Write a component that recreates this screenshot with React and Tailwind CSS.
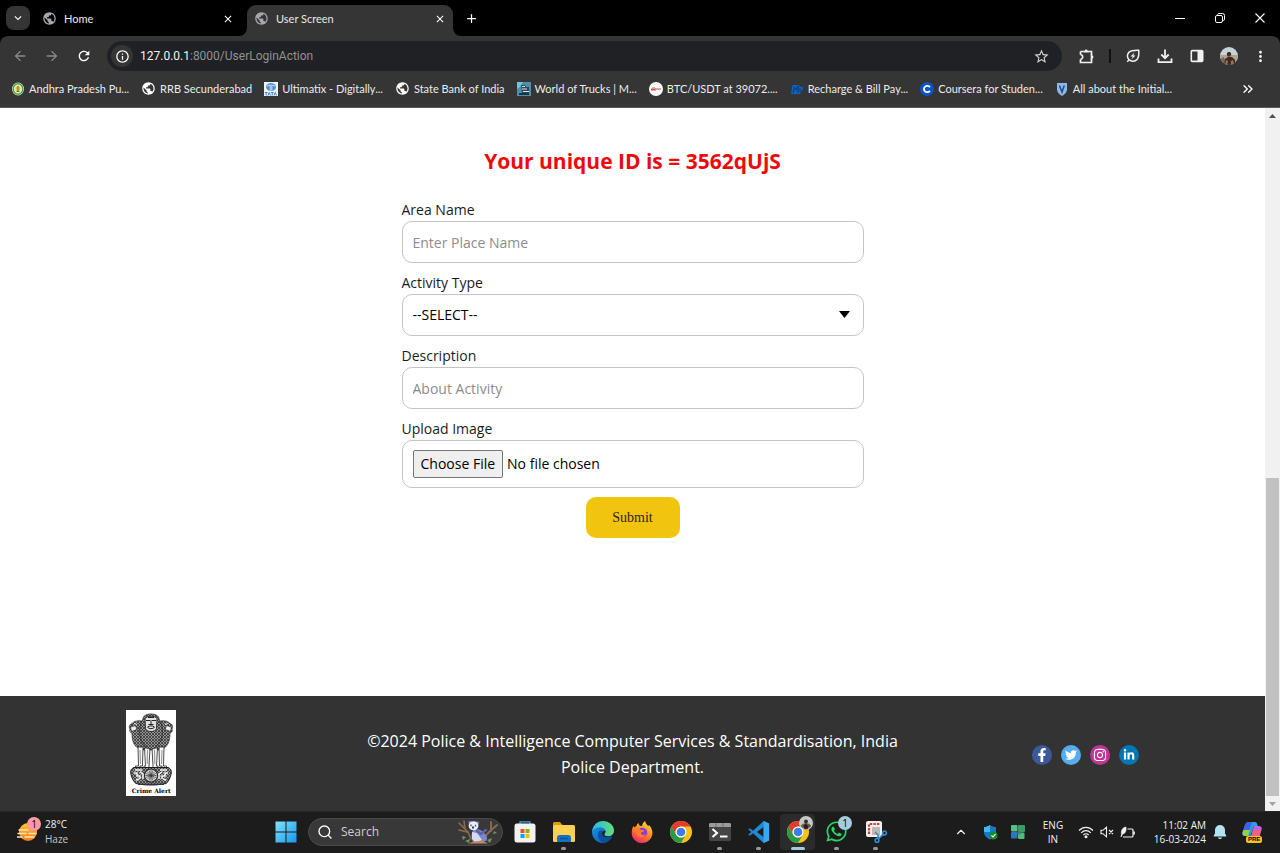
import React from "react";
import {
  MdPublic,
  MdRefresh,
  MdArrowBack,
  MdArrowForward,
  MdInfoOutline,
  MdStarBorder,
  MdMoreVert,
  MdExpandMore,
  MdClose,
  MdAdd,
} from "react-icons/md";
import { FaFacebookF, FaTwitter, FaLinkedinIn, FaInstagram, FaWhatsapp } from "react-icons/fa";
import { ChevronsRight, ChevronUp, Search } from "lucide-react";

/* ---------- Browser chrome ---------- */

function Tab({ title, active }) {
  return (
    <div
      className={
        active
          ? "relative flex h-[31px] w-[206px] items-center gap-[7px] rounded-t-[9px] bg-[#353535] px-[7px] pb-1"
          : "flex h-[31px] w-[206px] items-center gap-[7px] px-[7px] pb-1"
      }
    >
      {active && (
        <>
          <svg className="absolute bottom-0 -left-2 size-2" viewBox="0 0 8 8" aria-hidden="true">
            <path d="M8 0v8H0A8 8 0 0 0 8 0z" fill="#353535" />
          </svg>
          <svg className="absolute -right-2 bottom-0 size-2" viewBox="0 0 8 8" aria-hidden="true">
            <path d="M0 0v8h8A8 8 0 0 1 0 0z" fill="#353535" />
          </svg>
        </>
      )}
      <MdPublic className="size-[15px] shrink-0 text-[#a5a8ad]" />
      <span className="flex-1 text-[11px] leading-4 text-[#e8e8e8]">{title}</span>
      <button type="button" aria-label={`Close ${title}`} className="text-white">
        <MdClose className="size-3" />
      </button>
    </div>
  );
}

function WindowControls() {
  return (
    <div className="ml-auto flex items-center text-white">
      <button type="button" aria-label="Minimize" className="flex h-8 w-10 items-center justify-center">
        <svg className="size-[10px]" viewBox="0 0 10 10">
          <path d="M0 5.5h10" stroke="currentColor" />
        </svg>
      </button>
      <button type="button" aria-label="Restore" className="flex h-8 w-10 items-center justify-center">
        <svg className="size-[10px]" viewBox="0 0 10 10" fill="none" stroke="currentColor">
          <rect x=".5" y="2.5" width="7" height="7" rx="1.500" />
          <path d="M2.500 1.800C2.700 1 3.200.5 4 .5h3.500a2 2 0 0 1 2 2V6c0 .8-.4 1.400-1.200 1.600" />
        </svg>
      </button>
      <button type="button" aria-label="Close window" className="flex h-8 w-10 items-center justify-center">
        <svg className="size-[10px]" viewBox="0 0 10 10">
          <path d="M.5.5l9 9M9.500.5l-9 9" stroke="currentColor" strokeWidth="1.100" />
        </svg>
      </button>
    </div>
  );
}

function TabStrip() {
  return (
    <div className="flex h-9 items-end bg-black font-['Lato',sans-serif]">
      <div className="flex h-9 items-center pl-[6px]">
        <button
          type="button"
          aria-label="Search tabs"
          className="flex size-6 items-center justify-center rounded-lg bg-[#353535] text-white"
        >
          <MdExpandMore className="size-[14px]" />
        </button>
      </div>
      <div className="ml-[5px] flex items-end gap-[6px]">
        <Tab title="Home" />
        <Tab title="User Screen" active />
      </div>
      <button type="button" aria-label="New tab" className="flex h-9 w-9 items-center justify-center text-white">
        <MdAdd className="size-[15px]" />
      </button>
      <div className="ml-auto flex h-9 items-center">
        <WindowControls />
      </div>
    </div>
  );
}

function Avatar() {
  return (
    <svg className="size-[18px]" viewBox="0 0 18 18" aria-hidden="true">
      <defs>
        <clipPath id="avatarClip">
          <circle cx="9" cy="9" r="9" />
        </clipPath>
      </defs>
      <g clipPath="url(#avatarClip)">
        <rect width="18" height="18" fill="#c6d3d8" />
        <rect y="8" width="18" height="10" fill="#b2a58c" />
        <path d="M0 12l4-2 2 8H0z" fill="#6d6e5c" />
        <path d="M4 18l1-6 3-2 4 0 3 3 1 5z" fill="#3d2b26" />
        <circle cx="9" cy="7.500" r="2.200" fill="#4a332a" />
        <path d="M7 6.500a2.200 2.200 0 0 1 4 0z" fill="#17110f" />
        <path d="M6 13l2 1-1 4H5zM11 14l2-1 1 4h-3z" fill="#a0705b" />
      </g>
    </svg>
  );
}

function Toolbar() {
  return (
    <div className="flex items-center bg-black">
      <div className="flex h-[38px] flex-1 items-center rounded-t-lg bg-[#353535] pt-[2px] pr-[11px] pl-3">
        <div className="flex items-center gap-4 text-[#8b8b8b]">
          <button type="button" aria-label="Back">
            <MdArrowBack className="size-4" />
          </button>
          <button type="button" aria-label="Forward">
            <MdArrowForward className="size-4" />
          </button>
          <button type="button" aria-label="Reload" className="text-white">
            <MdRefresh className="size-4" />
          </button>
        </div>
        <div className="ml-[15px] flex h-[30px] flex-1 items-center rounded-full bg-[#202124] pr-3 pl-1">
          <button
            type="button"
            aria-label="Site information"
            className="flex size-[22px] items-center justify-center rounded-full bg-[#353535] text-white"
          >
            <MdInfoOutline className="size-[15px]" />
          </button>
          <a href="#address" className="ml-[7px] flex-1 font-['Roboto',sans-serif] text-xs leading-4 text-[#929292]">
            <span className="text-[#f3f3f3]">127.0.0.1</span>:8000/UserLoginAction
          </a>
          <button type="button" aria-label="Bookmark this page" className="text-[#d0d0d0]">
            <MdStarBorder className="size-[17px]" />
          </button>
        </div>
        <div className="ml-4 flex items-center text-[#f1f1f1]">
          <button type="button" aria-label="Extensions">
            <svg className="size-[17px]" viewBox="0 0 17 17" fill="currentColor">
              <path
                d="M2.500 3.500h3.200M10.300 3.500h3.200v3.700M13.500 10.800v3.700h-11v-3.300M2.500 3.500v3.300"
                fill="none"
                stroke="currentColor"
                strokeWidth="1.700"
              />
              <path d="M5.500 2.700h1a1.700 1.700 0 0 1 3.200 0h1v1.700H5.500zM12.700 6.500h1.600v1a1.700 1.700 0 0 1 0 3.200v1h-1.600z" />
              <path d="M2.500 6.800a2.200 2.200 0 0 1 0 4.400" fill="none" stroke="currentColor" strokeWidth="1.600" />
            </svg>
          </button>
          <span className="mx-[14px] h-[14px] w-[2px] bg-[#111]" />
          <button type="button" aria-label="Energy saver">
            <svg className="size-4" viewBox="0 0 16 16" fill="none" stroke="currentColor" strokeWidth="1.500">
              <path d="M13.700 2.300c.3 3 .4 6.600-1.500 9a5.600 5.600 0 0 1-8.300.3C1.800 9.500 2 6 4.100 4.100c2.300-2 6.500-1.900 9.600-1.800zM4 12l-1.800 1.800" />
              <path d="M9.500 4.500l-4 4h2.300l-1.300 3 4-4H8.300z" fill="currentColor" stroke="none" />
            </svg>
          </button>
          <button type="button" aria-label="Downloads" className="ml-4">
            <svg className="size-4" viewBox="0 0 16 16" fill="none" stroke="currentColor" strokeWidth="1.800">
              <path d="M8 1.500v8M4.300 6.500L8 10.200l3.700-3.700M1.500 10.500v3.700h13v-3.700" />
            </svg>
          </button>
          <button type="button" aria-label="Side panel" className="ml-4">
            <svg className="size-4" viewBox="0 0 16 16">
              <rect x="2.300" y="2.600" width="11.400" height="10.800" rx="1" fill="none" stroke="currentColor" strokeWidth="1.600" />
              <rect x="8.500" y="3" width="5" height="10" fill="currentColor" />
            </svg>
          </button>
          <button type="button" aria-label="Profile" className="ml-[15px]">
            <Avatar />
          </button>
          <button type="button" aria-label="Menu" className="ml-[14px]">
            <MdMoreVert className="size-[17px]" />
          </button>
        </div>
      </div>
    </div>
  );
}

const bookmarkIcon = {
  seal: (
    <svg className="size-[14px]" viewBox="0 0 14 14">
      <ellipse cx="7" cy="7" rx="6" ry="6.500" fill="#e4efbf" />
      <ellipse cx="7" cy="7" rx="4.800" ry="5.200" fill="none" stroke="#4f9b4b" strokeWidth="1.400" />
      <circle cx="7" cy="6.500" r="2.500" fill="#e9c04b" />
      <path d="M7 4v6M5.500 9.500h3" stroke="#55732b" />
    </svg>
  ),
  globe: <MdPublic className="size-[15px] text-white" />,
  tata: (
    <svg className="size-[14px]" viewBox="0 0 14 14">
      <rect width="14" height="14" fill="#eef5fc" />
      <ellipse cx="7" cy="5" rx="5" ry="4" fill="#4f8fd0" />
      <path d="M3 4.200c2-1.400 6-1.400 8 0M6.200 4v4.500M7.800 4v4.500" stroke="#eef5fc" strokeWidth=".8" fill="none" />
      <path d="M.8 10.500h2.800M2.200 10.500v3M4 13.500l1.200-3 1.200 3M6.800 10.500h2.800M8.200 10.500v3M10 13.500l1.200-3 1.300 3" stroke="#3f80c4" strokeWidth="1" fill="none" />
    </svg>
  ),
  truck: (
    <svg className="size-[14px]" viewBox="0 0 14 14">
      <rect width="14" height="14" fill="#4f8eac" />
      <path d="M0 0h6l-3 5-3 2z" fill="#7cc0d8" />
      <path d="M4 3h4l1 2h3v6H5z" fill="#29465a" />
      <path d="M5 4.500h3M5 7h5M6 9.500h6" stroke="#d6e3e8" strokeWidth="1" />
      <path d="M2 11h10v2H2z" fill="#1d3440" />
    </svg>
  ),
  coin: (
    <svg className="size-[14px]" viewBox="0 0 14 14">
      <circle cx="7" cy="7" r="7" fill="#fff" />
      <path d="M2 7.500h5" stroke="#d84c43" strokeWidth="2" />
      <path d="M6 7h6" stroke="#e99790" strokeWidth="1.800" />
      <path d="M3 5.800h3" stroke="#8d8d9a" strokeWidth=".8" />
    </svg>
  ),
  bill: (
    <svg className="size-[14px]" viewBox="0 0 14 14">
      <path d="M1 12L2.500 3H9l.5 1.500L13 5l-.5 3.500-2 .5V12z" fill="#0c62bd" />
      <path d="M3 11l1.500-6L6 8l2-4v7M10 6v4" stroke="#083872" strokeWidth="1" fill="none" />
    </svg>
  ),
  coursera: (
    <svg className="size-[14px]" viewBox="0 0 14 14">
      <circle cx="7" cy="7" r="7" fill="#0b53c6" />
      <path d="M9.900 8.700A3.200 3.200 0 1 1 9.900 5.300" fill="none" stroke="#fff" strokeWidth="1.800" />
    </svg>
  ),
  shield: (
    <svg className="size-[14px]" viewBox="0 0 14 14">
      <path d="M2 1h10v6.500c0 3-2.500 5-5 6.500-2.500-1.500-5-3.500-5-6.500z" fill="#8db8e9" />
      <path d="M4.500 3.500l2.500 6.500 2.300-6.500" stroke="#204c86" strokeWidth="1.500" fill="none" />
    </svg>
  ),
};

const bookmarks = [
  ["seal", "Andhra Pradesh Pu..."],
  ["globe", "RRB Secunderabad"],
  ["tata", "Ultimatix - Digitally..."],
  ["globe", "State Bank of India"],
  ["truck", "World of Trucks | M..."],
  ["coin", "BTC/USDT at 39072...."],
  ["bill", "Recharge & Bill Pay..."],
  ["coursera", "Coursera for Studen..."],
  ["shield", "All about the Initial..."],
];

function BookmarksBar() {
  return (
    <nav
      aria-label="Bookmarks"
      className="flex h-[34px] items-center gap-3 border-b border-[#5a5a5a] bg-[#353535] pr-6 pb-1 pl-[11px] font-['Lato',sans-serif]"
    >
      {bookmarks.map(([icon, label]) => (
        <a key={label} href="#bookmark" className="flex items-center gap-1 whitespace-nowrap text-[#ececec]">
          {bookmarkIcon[icon]}
          <span className="text-[11px] leading-4">{label}</span>
        </a>
      ))}
      <button type="button" aria-label="More bookmarks" className="ml-auto text-white">
        <ChevronsRight className="size-4" />
      </button>
    </nav>
  );
}

/* ---------- Web page ---------- */

const fieldBox =
  "w-full rounded-[10px] border border-[#c4c4c4] bg-white px-[10px] text-sm text-black outline-none placeholder:text-[#8c8c8c]";

function Field({ id, label, children }) {
  return (
    <div className="flex flex-col">
      <label htmlFor={id} className="mb-[2px] text-sm leading-[18px] text-[#1c1c1c]">
        {label}
      </label>
      {children}
    </div>
  );
}

function ReportForm() {
  return (
    <form className="mx-auto flex w-full max-w-[462px] flex-col gap-[11px]" onSubmit={(e) => e.preventDefault()}>
      <Field id="area" label="Area Name">
        <input id="area" type="text" placeholder="Enter Place Name" className={`${fieldBox} h-[42px]`} />
      </Field>
      <Field id="activity" label="Activity Type">
        <div className="relative">
          <select id="activity" defaultValue="" className={`${fieldBox} h-[42px] appearance-none`}>
            <option value="">--SELECT--</option>
          </select>
          <svg
            className="pointer-events-none absolute top-[17px] right-[14px] h-[7px] w-[11px]"
            viewBox="0 0 11 7"
            aria-hidden="true"
          >
            <path d="M0 0h11L5.500 7z" fill="#000" />
          </svg>
        </div>
      </Field>
      <Field id="description" label="Description">
        <input id="description" type="text" placeholder="About Activity" className={`${fieldBox} h-[42px]`} />
      </Field>
      <Field id="upload" label="Upload Image">
        <input
          id="upload"
          type="file"
          className={`${fieldBox} h-12 py-[9px] leading-[26px] file:h-7 file:rounded-[2px] file:border file:border-solid file:border-[#767676] file:bg-[#efefef] file:px-[7px] file:text-sm file:text-black`}
        />
      </Field>
      <button
        type="submit"
        className="-mt-[2px] h-[41px] w-[94px] self-center rounded-[10px] bg-[#f1c40f] font-['Liberation_Serif',serif] text-sm text-[#2c2410]"
      >
        Submit
      </button>
    </form>
  );
}

function Emblem() {
  return (
    <div className="flex h-[86px] w-[50px] flex-col items-center bg-white">
      <svg className="h-[76px] w-[50px]" viewBox="0 0 50 76" role="img" aria-label="Lion capital emblem">
        <defs>
          <pattern id="mane" width="3" height="3" patternUnits="userSpaceOnUse">
            <rect width="3" height="3" fill="#3a3a3a" />
            <path d="M0 1.500L1.500 0 3 1.500 1.500 3z" fill="#b4b4b4" />
            <circle cx="1.500" cy="1.500" r=".6" fill="#222" />
          </pattern>
        </defs>
        {/* side lions */}
        <path
          d="M17 11.500c-3-1.500-8-1-10.500 1.500-3 1-4 4-2.500 6-.8 2 0 3.500 2 4 0 6 1 11 4.500 14l4 3h21l4-3c3.500-3 4.500-8 4.500-14 2-.5 2.800-2 2-4 1.500-2 .5-5-2.500-6C41 10.500 36 10 33 11.500z"
          fill="url(#mane)"
          stroke="#222"
          strokeWidth=".6"
        />
        <path d="M4.500 17l5-1.500 1.500 4-5.500 2zM45.500 17l-5-1.500-1.500 4 5.500 2z" fill="#eee" stroke="#222" strokeWidth=".7" />
        <path d="M8 13.500l3 1M42 13.500l-3 1M5.500 19l4-.5M44.500 19l-4-.5" stroke="#f2f2f2" strokeWidth=".9" />
        {/* legs */}
        <path
          d="M12 37h5l-.5 19H14v2H9.500v-2H12.500zM38 37h-5l.5 19H36v2h4.500v-2H37.500zM18.500 38h5.500l-1 18v2h-5v-2h1.500zM31.500 38H26l1 18v2h5v-2h-1.500z"
          fill="#f6f6f6"
          stroke="#222"
          strokeWidth=".8"
        />
        <path d="M14 40l.5 14M21.500 40l-.3 14M28.500 40l.3 14M36 40l-.5 14" stroke="#777" strokeWidth=".8" />
        {/* central lion */}
        <path
          d="M17 9c0-3 3-5 8-5s8 2 8 5l2 4c2 6 2 13-1 19l-4 5c-3 3-7 3-10 0l-4-5c-3-6-3-13-1-19z"
          fill="url(#mane)"
          stroke="#222"
          strokeWidth=".7"
        />
        <path d="M19 8.500c2-3 10-3 12 0l-.5 10c-1 4-10 4-11 0z" fill="#e2e2e2" stroke="#222" strokeWidth=".9" />
        <path
          d="M20 10.500h4M26 10.500h4M25 10v4M22.500 14.500h5M21.500 17c2-1.500 5-1.500 7 0-1 2.200-6 2.200-7 0M22 7.500h6"
          fill="none"
          stroke="#222"
          strokeWidth="1"
        />
        {/* abacus */}
        <path
          d="M8 57.500h34c3 1 4 4 3 7s-2 7-5 9c-9 2-21 2-30 0-3-2-4-6-5-9s0-6 3-7z"
          fill="url(#mane)"
          stroke="#1c1c1c"
          strokeWidth="1"
        />
        <path
          d="M8 63h3v3h3v3M10 70l3-1M14 62l3 2v5M42 63h-3v3h-3v3M40 70l-3-1M36 62l-3 2v5M9 60h7M34 60h7"
          stroke="#f5f5f5"
          strokeWidth="1.500"
          fill="none"
        />
        <circle cx="25" cy="65.500" r="6.500" fill="#e2e2e2" stroke="#222" strokeWidth="1.100" />
        <path
          d="M25 60v11M19.500 65.500h11M21.100 61.600l7.800 7.800M28.900 61.600l-7.800 7.800M23 60.500l4 10M27 60.500l-4 10M20 63.500l10 4M20 67.500l10-4"
          stroke="#333"
          strokeWidth=".7"
        />
        <path d="M12 74.300h26" stroke="#333" strokeWidth="1.200" />
      </svg>
      <span className="font-['DejaVu_Serif',serif] text-[6px] leading-[10px] font-bold whitespace-nowrap text-black">
        Crime Alert
      </span>
    </div>
  );
}

const socials = [
  { name: "Facebook", bg: "bg-[#3b5998]", Icon: FaFacebookF, size: "size-[14px]" },
  { name: "Twitter", bg: "bg-[#55acee]", Icon: FaTwitter, size: "size-3" },
  { name: "Instagram", bg: "bg-[#c13599]", Icon: FaInstagram, size: "size-[14px]" },
  { name: "LinkedIn", bg: "bg-[#0077b5]", Icon: FaLinkedinIn, size: "size-3" },
];

function Footer() {
  return (
    <footer className="grid min-h-[115px] grid-cols-[24%_1fr_24%] items-center bg-[#333]">
      <div className="flex justify-center pr-px pb-px">
        <Emblem />
      </div>
      <p className="mx-auto max-w-[570px] text-center text-base leading-[26px] text-white">
        ©2024 Police &amp; Intelligence Computer Services &amp; Standardisation, India Police Department.
      </p>
      <div className="flex justify-center gap-[9px] pt-[2px] pr-14">
        {socials.map(({ name, bg, Icon, size }) => (
          <a
            key={name}
            href="#social"
            aria-label={name}
            className={`flex size-5 items-center justify-center rounded-full text-white ${bg}`}
          >
            <Icon className={size} />
          </a>
        ))}
      </div>
    </footer>
  );
}

function Scrollbar() {
  return (
    <div className="flex w-[15px] shrink-0 flex-col items-center bg-[#f1f1f1]" aria-hidden="true">
      <svg className="h-4 w-[15px]" viewBox="0 0 15 16">
        <path d="M4 10l3.500-4L11 10z" fill="#505050" />
      </svg>
      <div className="flex-[354]" />
      <div className="w-[13px] flex-[318] bg-[#c1c1c1]" />
      <svg className="h-[15px] w-[15px]" viewBox="0 0 15 15">
        <path d="M4 6l3.500 4L11 6z" fill="#a3a3a3" />
      </svg>
    </div>
  );
}

/* ---------- Taskbar ---------- */

function WeatherIcon() {
  return (
    <svg className="size-6" viewBox="0 0 24 24" aria-hidden="true">
      <defs>
        <linearGradient id="sun" x1="0" y1="0" x2="0" y2="1">
          <stop offset="0" stopColor="#ffc52e" />
          <stop offset="1" stopColor="#ee7a1c" />
        </linearGradient>
      </defs>
      <circle cx="11" cy="12" r="9" fill="url(#sun)" />
      <path d="M2 10h9M1 13.500h8M12 13.500h7M0 17h5M8 17h9" stroke="#fbe3b8" strokeWidth="1.400" strokeLinecap="round" />
    </svg>
  );
}

function WindowsIcon() {
  return (
    <svg className="size-[22px]" viewBox="0 0 22 22">
      <defs>
        <linearGradient id="win" x1="0" y1="0" x2="1" y2="1">
          <stop offset="0" stopColor="#7fe3fb" />
          <stop offset="1" stopColor="#1797f0" />
        </linearGradient>
      </defs>
      <path d="M.5.5h10v10H.5zM11.500.5h10v10h-10zM.5 11.500h10v10H.5zM11.500 11.500h10v10h-10z" fill="url(#win)" />
    </svg>
  );
}

function KoalaArt() {
  return (
    <svg className="h-6 w-10" viewBox="0 0 40 24" aria-hidden="true">
      <g fill="none" strokeLinecap="round">
        <path d="M1 3l9 9 3 7M6 1l1 8M1 10l8 2" stroke="#8d6a4d" strokeWidth="1.600" />
        <path d="M39 5l-7 6-9 10M33 2v9" stroke="#8d6a4d" strokeWidth="1.900" />
      </g>
      <path d="M4 16l4 1-3 3zM7 21l5-2-1 4zM36 11l3 2-4 1zM29 20l5-2-2 5z" fill="#6f9a55" />
      <path d="M15 10c4-2 9 0 11 3 3 3 4 5 2 8l-4 1h-9c-2-4-2-8 0-12z" fill="#7c88c9" />
      <path d="M14 12l5 1 5 7-6 3-4-4z" fill="#d5daf1" />
      <path d="M19 11l4 3 5-4" fill="none" stroke="#5764a6" strokeWidth="2.400" strokeLinecap="round" />
      <path d="M10 23.500h20l-6-3-8 1z" fill="#c58762" />
      <circle cx="12" cy="2.500" r="1.700" fill="#6b79bb" />
      <circle cx="19.500" cy="3" r="1.800" fill="#6b79bb" />
      <ellipse cx="15.500" cy="5.800" rx="4.900" ry="4.500" fill="#e9edfa" />
      <path d="M13 4.500v1.800M17.500 4.800v1.800" stroke="#35457f" strokeWidth="1.200" />
      <ellipse cx="15" cy="7.500" rx="1" ry="1.300" fill="#26335f" />
    </svg>
  );
}

function StoreIcon() {
  return (
    <svg className="size-[22px]" viewBox="0 0 22 22">
      <path d="M6 5V.8h10V5" fill="none" stroke="#37a8e0" strokeWidth="1.300" />
      <rect x=".5" y="2.500" width="21" height="19" rx="2.500" fill="#f2f2f2" />
      <path d="M6.500 8h4v4h-4z" fill="#f25022" />
      <path d="M11.500 8h4v4h-4z" fill="#7fba00" />
      <path d="M6.500 13h4v4h-4z" fill="#00a4ef" />
      <path d="M11.500 13h4v4h-4z" fill="#ffb900" />
    </svg>
  );
}

function FolderIcon() {
  return (
    <svg className="size-[22px]" viewBox="0 0 22 22">
      <path d="M0 2.500C0 1.700.7 1 1.500 1H7l2.500 3H20v6H0z" fill="#d89b15" />
      <rect y="4" width="22" height="17" rx="1.500" fill="#fdd052" />
      <path d="M4 21v-4.500C4 15.100 5 14 6.500 14h9c1.500 0 2.500 1.100 2.500 2.500V21z" fill="#1672c4" />
      <path d="M7 17.500h8" stroke="#0b4f96" strokeWidth="1.500" />
    </svg>
  );
}

function EdgeIcon() {
  return (
    <svg className="size-[22px]" viewBox="0 0 24 24">
      <defs>
        <linearGradient id="edgeTop" x1="0" y1="0" x2="1" y2="0">
          <stop offset="0" stopColor="#2bb3ec" />
          <stop offset="1" stopColor="#62e07a" />
        </linearGradient>
        <linearGradient id="edgeLow" x1="0" y1="0" x2="1" y2="1">
          <stop offset="0" stopColor="#1990dd" />
          <stop offset="1" stopColor="#0b55b0" />
        </linearGradient>
      </defs>
      <path d="M0 12c0-3 4-6 9-5.500 3 .3 5 2 5.500 4-3 0-4 2-3.500 4 1 3.500 6.500 4.500 11 2.500-2 4.500-6 7-10.500 7C5 24 0 18.500 0 12z" fill="url(#edgeLow)" />
      <path
        d="M0 12C.6 5 5.500 0 12 0s12 4.800 12 10.300c0 4-3 6.300-6.500 6.300-2.500 0-4-.9-4-1.900 0-.8 1.300-1.400 1.300-3.400 0-2.300-2.600-4.300-6.300-4.300C4.500 7 1 9.200 0 12z"
        fill="url(#edgeTop)"
      />
      <path d="M8 10.500c-3 4-1.500 11 5 13.300 3.500-.4 7-2.800 8.800-6.300-6 2.200-11 0-11-4.500 0-1 .4-2 1.200-2.700z" fill="#0c4da0" />
    </svg>
  );
}

function FirefoxIcon() {
  return (
    <svg className="size-[22px]" viewBox="0 0 24 24">
      <defs>
        <linearGradient id="fox" x1=".8" y1="0" x2=".3" y2="1">
          <stop offset="0" stopColor="#ffe23c" />
          <stop offset=".5" stopColor="#ff8a1f" />
          <stop offset="1" stopColor="#f3246d" />
        </linearGradient>
      </defs>
      <path
        d="M2.500 5.500L4 7c.6-.8 1-1.200 2-1.600C6.300 4 7 3 8.300 2.200c0 1.500.4 2.200 1.500 3L12 5.500C12.500 3 13.500 1.200 15.500 0c.2 3 2 4 3.200 5.500l1.300-1c3 3.500 3.800 7 3.200 10.500C22 20.500 17.500 24 12 24 5.500 24 .8 19 .8 13 .8 10 1.500 7.500 2.500 5.500z"
        fill="url(#fox)"
      />
      <circle cx="12.500" cy="12.500" r="5.200" fill="#8a3ee0" />
      <path d="M5 8.500c3-1 5 .2 6 1.500 1.500-.3 2.500 0 3.500.6-1 1.400-3 1.200-3.500 2.400-.5 2 2.500 3.200 5 1.500-1 3.500-6 4.500-8.800 1.300C5.500 14 4.500 11 5 8.500z" fill="#ff7d26" />
    </svg>
  );
}

function ChromeIcon() {
  return (
    <svg className="size-[22px]" viewBox="0 0 24 24">
      <circle cx="12" cy="12" r="12" fill="#fbc116" />
      <path d="M1.610 6A12 12 0 0 1 22.390 6H12a6 6 0 0 0-5.200 9z" fill="#e33b2e" />
      <path d="M1.610 6A12 12 0 0 0 12 24l5.200-9a6 6 0 0 1-10.400 0z" fill="#2a9a48" />
      <circle cx="12" cy="12" r="6" fill="#fff" />
      <circle cx="12" cy="12" r="4.700" fill="#3b7ded" />
    </svg>
  );
}

function TerminalIcon() {
  return (
    <svg className="size-[22px]" viewBox="0 0 22 22">
      <rect y="2" width="22" height="18" rx="1.500" fill="#454545" />
      <path d="M0 3.500C0 2.700.7 2 1.500 2h19c.8 0 1.500.7 1.500 1.500V6H0z" fill="#9b9b9b" />
      <path d="M7 2v4M14 2v4" stroke="#666" strokeWidth=".8" />
      <path d="M3.500 8l4.500 4-4.500 4" fill="none" stroke="#fff" strokeWidth="2" />
      <path d="M11 15.500h7.500" stroke="#fff" strokeWidth="2" />
    </svg>
  );
}

function CodeIcon() {
  return (
    <svg className="size-[22px]" viewBox="0 0 24 24">
      <path d="M17 0l6 2.700v18.600L17 24 5.500 13.300 2 16 .3 15l3.200-3L.3 9 2 8l3.500 2.700zM17 6.500L9.800 12l7.200 5.500z" fill="#1f8ad2" fillRule="evenodd" />
      <path d="M17 0l6 2.700v18.600L17 24z" fill="#36a9ef" />
    </svg>
  );
}

function SnipIcon() {
  return (
    <svg className="size-[22px]" viewBox="0 0 22 22">
      <rect x="1" y="0" width="16" height="16" rx="2" fill="#f1f1f1" />
      <rect x="7" y="6" width="8" height="8" fill="#b9b9b9" />
      <path d="M4 13V3h11" fill="none" stroke="#d3412d" strokeWidth="2.200" strokeDasharray="2.400 1.200" />
      <path d="M10 11l4 4" stroke="#7c7c7c" strokeWidth="1.600" />
      <g fill="none" stroke="#2f94d8" strokeWidth="1.500">
        <circle cx="12" cy="19.500" r="1.900" />
        <circle cx="19.500" cy="12" r="1.900" />
        <path d="M13.500 18l4.500-5M12.500 17.500l1-4M16.500 13.500l2.500.5" />
      </g>
    </svg>
  );
}

function AppButton({ name, running, active, badge, children }) {
  return (
    <button
      type="button"
      aria-label={name}
      className={
        active
          ? "relative mx-[2px] flex h-9 w-[35px] items-center justify-center rounded-[4px] bg-[#2b2b2b]"
          : "relative flex h-9 w-[39px] items-center justify-center"
      }
    >
      {children}
      {badge}
      {running && <span className="absolute bottom-0 h-[3px] w-[5px] rounded-full bg-[#9a9a9a]" />}
      {active && <span className="absolute bottom-0 h-[3px] w-[14px] rounded-full bg-[#9ccbe4]" />}
    </button>
  );
}

function CopilotIcon() {
  return (
    <span className="relative flex size-[22px] items-start justify-center">
      <svg className="size-5" viewBox="0 0 20 20" aria-hidden="true">
        <path d="M7 1h6c1 0 1.700.6 2 1.500l.8 2.500H12L8.500 15H3c-2 0-3-1.500-2.500-3.500L3 4c.6-2 2-3 4-3z" fill="#2c9be8" />
        <path d="M3 4c.6-2 2-3 4-3h3L7 10H1z" fill="#3f62df" />
        <path d="M.5 11l1-2H8l-2 6H3c-2 0-3-1.500-2.500-4z" fill="#8fd24b" />
        <path d="M12 5h5c2 0 3.200 1.500 2.600 3.500L17.500 16c-.6 2-2 3-4 3H8z" fill="#c65fe0" />
        <path d="M11 9h8l-2 7c-.6 2-2 3-4 3H8z" fill="#f0637a" />
      </svg>
      <span className="absolute bottom-0 left-[5px] rounded-[2px] bg-[#fcc222] px-[2px] font-['Liberation_Sans',sans-serif] text-[6px] leading-[7px] font-bold text-black">
        PRE
      </span>
    </span>
  );
}

function Taskbar() {
  return (
    <div className="flex h-[42px] items-center border-t border-[#262626] bg-[#1c1c1c] pb-[2px] text-[#f2f2f2]">
      <button type="button" className="flex w-[266px] shrink-0 items-center gap-1 pl-[17px] text-left">
        <span className="relative">
          <WeatherIcon />
          <span className="absolute -top-[3px] left-[10px] flex size-[14px] items-center justify-center rounded-full bg-[#ff99a4] text-[10px] leading-none text-black">
            1
          </span>
        </span>
        <span className="flex flex-col text-[10px] leading-[15px]">
          <span>28°C</span>
          <span className="text-[#c5c5c5]">Haze</span>
        </span>
      </button>

      <div className="flex items-center">
        <AppButton name="Start">
          <WindowsIcon />
        </AppButton>
        <label className="mr-[2px] ml-[3px] flex h-7 w-[195px] items-center gap-2 rounded-full border border-[#4a4a4a] bg-[#383838] pr-1 pl-2">
          <Search className="size-4 shrink-0 text-white" />
          <input
            type="text"
            aria-label="Search"
            placeholder="Search"
            className="w-full min-w-0 flex-1 bg-transparent text-xs text-white outline-none placeholder:text-[#cfcfcf]"
          />
          <KoalaArt />
        </label>
        <AppButton name="Microsoft Store">
          <StoreIcon />
        </AppButton>
        <AppButton name="File Explorer" running>
          <FolderIcon />
        </AppButton>
        <AppButton name="Edge">
          <EdgeIcon />
        </AppButton>
        <AppButton name="Firefox">
          <FirefoxIcon />
        </AppButton>
        <AppButton name="Chrome">
          <ChromeIcon />
        </AppButton>
        <AppButton name="Terminal" running>
          <TerminalIcon />
        </AppButton>
        <AppButton name="Visual Studio Code" running>
          <CodeIcon />
        </AppButton>
        <AppButton
          name="Chrome, User Screen"
          active
          badge={
            <span className="absolute top-[2px] right-[2px] rounded-full">
              <svg className="size-[14px]" viewBox="0 0 18 18" aria-hidden="true">
                <circle cx="9" cy="9" r="9" fill="#c3c9c9" />
                <path d="M2 13l3-3 4-1 4 1 3 3a9 9 0 0 1-14 0z" fill="#6c5a4c" />
                <circle cx="9" cy="7" r="2.500" fill="#3a2b25" />
                <path d="M6 12l3-2 3 3-1 4H7z" fill="#2b201c" />
              </svg>
            </span>
          }
        >
          <ChromeIcon />
        </AppButton>
        <AppButton
          name="WhatsApp"
          running
          badge={
            <span className="absolute top-[2px] right-1 flex size-[14px] items-center justify-center rounded-full bg-[#a5cbe0] text-[10px] leading-none text-black">
              1
            </span>
          }
        >
          <FaWhatsapp className="size-[23px] text-[#2bd567]" />
        </AppButton>
        <AppButton name="Snipping Tool" running>
          <SnipIcon />
        </AppButton>
      </div>

      <div className="ml-auto flex items-center pr-[17px]">
        <button type="button" aria-label="Hidden icons">
          <ChevronUp className="size-[14px]" />
        </button>
        <button type="button" aria-label="Windows Security" className="ml-[14px]">
          <svg className="size-4" viewBox="0 0 16 16">
            <path d="M8 1c2 1.500 4 2 6 2v5c0 4-3 6-6 7.500C5 14 2 12 2 8V3c2 0 4-.5 6-2z" fill="#1878ce" />
            <path d="M8 1v7H2V3c2 0 4-.5 6-2z" fill="#47b6ef" />
            <circle cx="11.500" cy="11.500" r="4" fill="#158a2d" />
            <path d="M9.500 11.500l1.500 1.500 2.500-3" fill="none" stroke="#fff" strokeWidth="1.100" />
          </svg>
        </button>
        <button type="button" aria-label="Widgets" className="ml-3">
          <svg className="size-4" viewBox="0 0 16 16">
            <rect x="1" y="1" width="6.500" height="6.500" rx="1" fill="#58bd8c" />
            <rect x="8" y="1" width="7" height="7" rx="1" fill="#3e9a63" />
            <rect x="1" y="8" width="6.500" height="6.500" rx="1" fill="#2c77b9" />
            <rect x="8" y="8.500" width="6.500" height="6.500" rx="1" fill="#55b974" />
            <path d="M7.500 7.500h3v3h-3z" fill="#2d8a88" />
          </svg>
        </button>
        <button type="button" className="ml-4 flex w-[22px] flex-col items-center text-[10px] leading-[14px]">
          <span>ENG</span>
          <span>IN</span>
        </button>
        <button type="button" aria-label="Network, volume and battery" className="ml-[14px] flex items-center gap-[6px]">
          <svg className="h-[14px] w-4" viewBox="0 0 16 14" fill="none" stroke="currentColor" strokeWidth="1.200">
            <path d="M1 5.500c4-4.300 10-4.300 14 0M3.200 7.800c2.800-3 6.800-3 9.600 0M5.400 10c1.500-1.700 3.700-1.700 5.200 0" />
            <circle cx="8" cy="11.800" r=".9" fill="currentColor" />
          </svg>
          <svg className="h-3 w-[14px]" viewBox="0 0 14 12" fill="none" stroke="currentColor" strokeWidth="1.100">
            <path d="M1 4.300h2L6.500 1.200v9.600L3 7.700H1zM9 4l4 4M13 4L9 8" />
          </svg>
          <svg className="h-3 w-[15px]" viewBox="0 0 15 12" fill="none" stroke="currentColor" strokeWidth="1.200">
            <path d="M7.500 3H12c.7 0 1 .3 1 1v6c0 .7-.3 1-1 1H3M14.300 5.500v3" />
            <path d="M1.500 8C.8 4.500 2.500 1.500 6 1c.5 3.500-.5 6.500-3.300 7L1 11z" fill="currentColor" strokeWidth=".6" />
          </svg>
        </button>
        <button type="button" className="ml-[11px] flex w-[60px] flex-col items-end text-[10px] leading-[14px] whitespace-nowrap">
          <span>11:02 AM</span>
          <span>16-03-2024</span>
        </button>
        <button type="button" aria-label="Notifications" className="ml-[7px]">
          <svg className="h-4 w-[14px]" viewBox="0 0 14 16" fill="#b5e2ef">
            <path d="M7 1a5 5 0 0 1 5 5v3.500l1.200 2c.2.500 0 1-.6 1H1.400c-.6 0-.8-.5-.6-1l1.200-2V6a5 5 0 0 1 5-5zM5 13.500h4c-.3 1-1 1.500-2 1.500s-1.700-.5-2-1.500z" />
          </svg>
        </button>
        <button type="button" aria-label="Copilot" className="ml-[14px]">
          <CopilotIcon />
        </button>
      </div>
    </div>
  );
}

export default function App() {
  return (
    <div className="flex min-h-screen flex-col overflow-hidden bg-white font-['Open_Sans',sans-serif]">
      <header>
        <TabStrip />
        <Toolbar />
        <BookmarksBar />
      </header>
      <div className="flex flex-1">
        <div className="flex flex-1 flex-col">
          <main className="flex-1 px-4 pt-[37px]">
            <h1 className="mb-6 text-center text-[21px] leading-8 font-bold text-[#ee0a0a]">
              Your unique ID is = 3562qUjS
            </h1>
            <ReportForm />
          </main>
          <Footer />
        </div>
        <Scrollbar />
      </div>
      <Taskbar />
    </div>
  );
}
